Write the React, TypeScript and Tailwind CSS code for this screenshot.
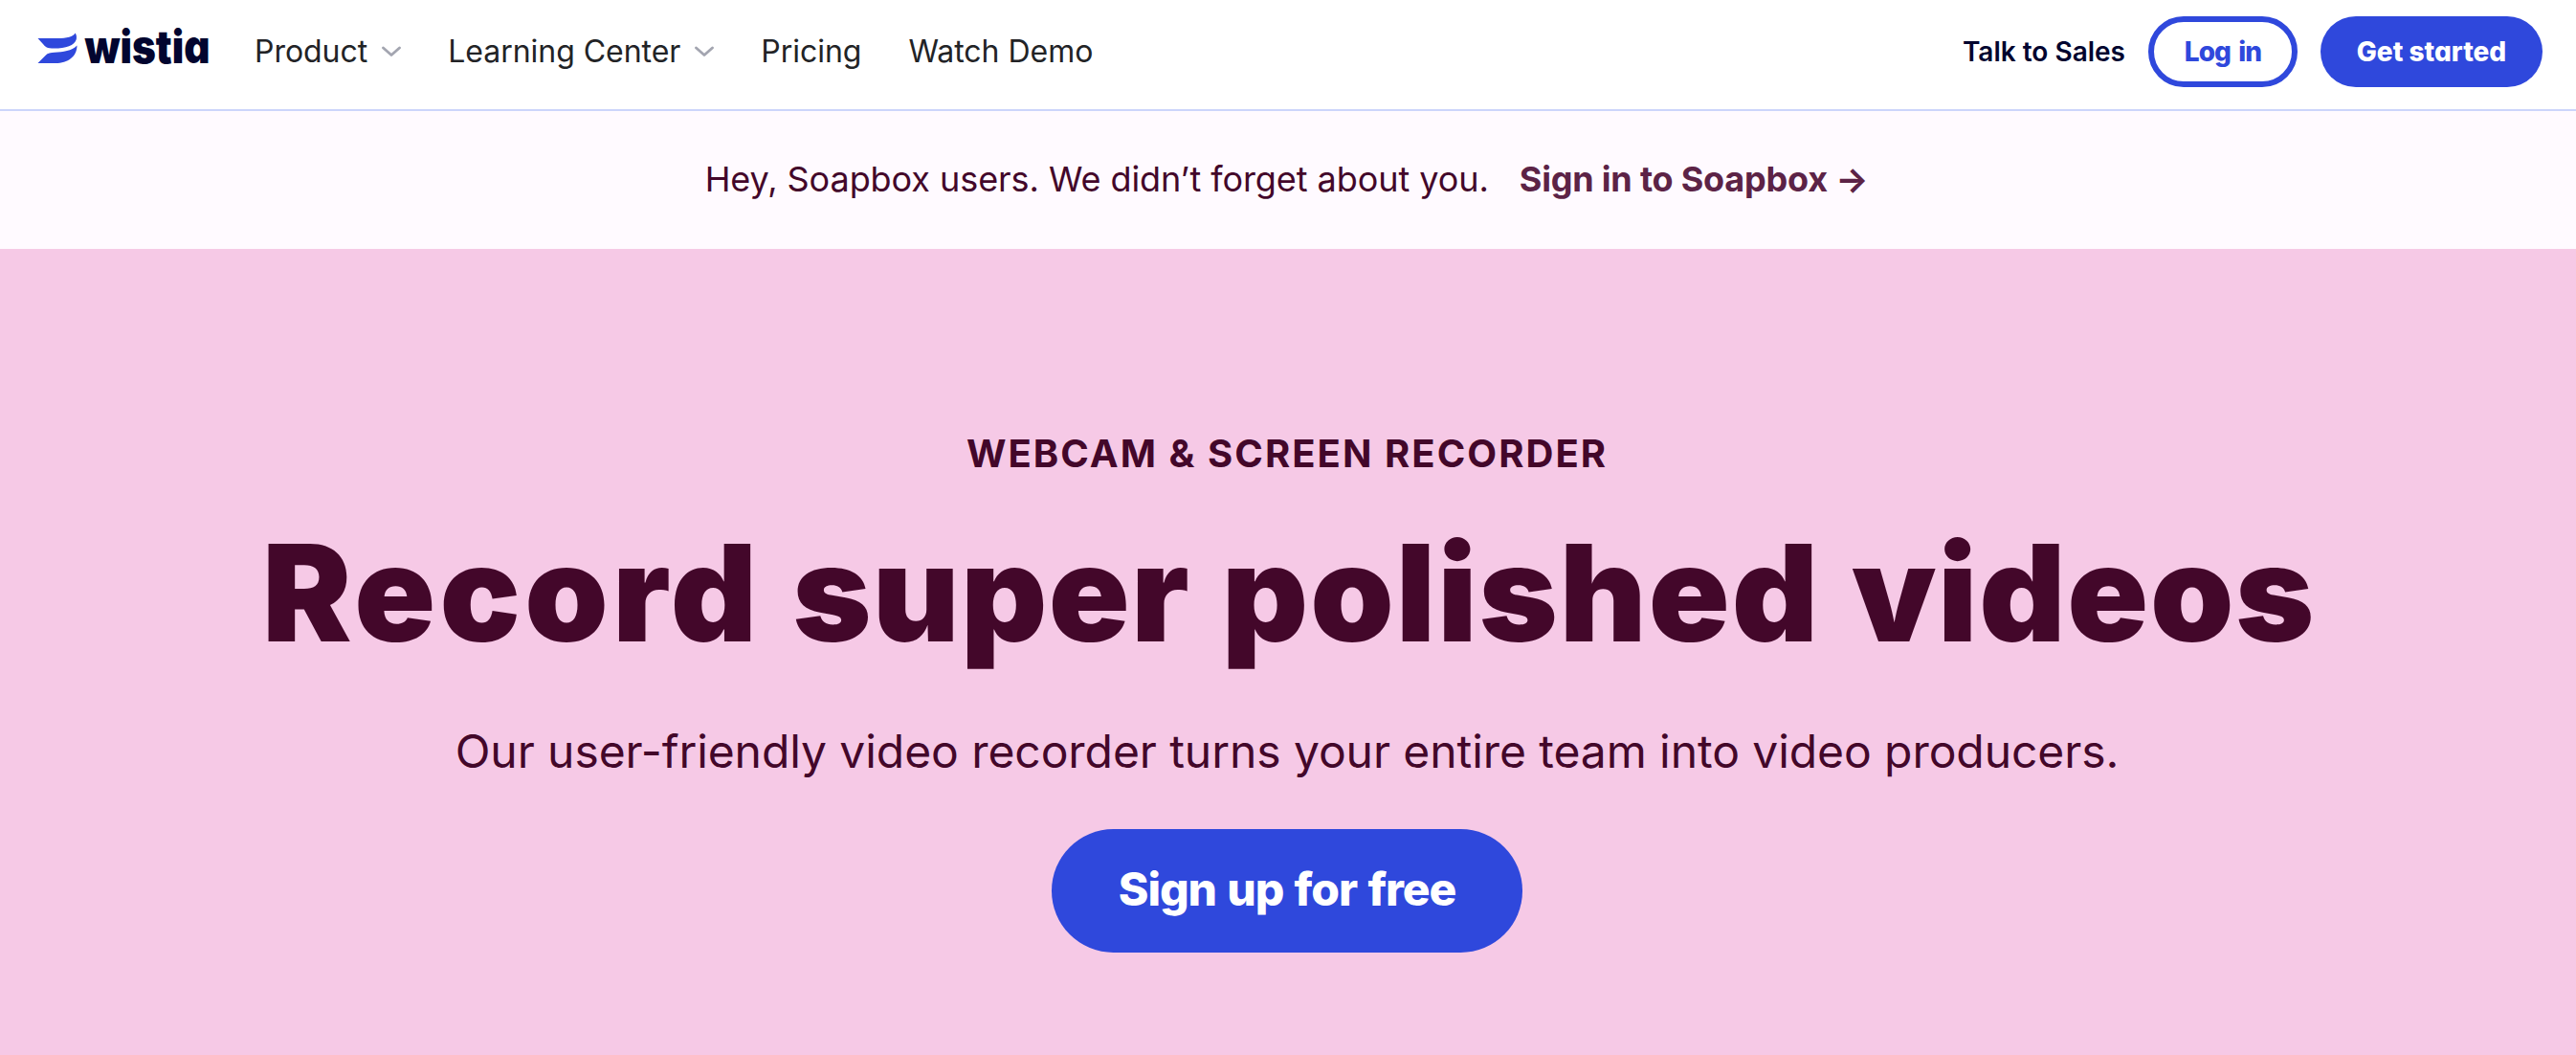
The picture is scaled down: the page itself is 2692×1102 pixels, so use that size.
function WistiaLogo() {
  return (
    <svg width="190" height="76" viewBox="38 10 190 76" className="shrink-0 overflow-visible" role="img" aria-label="wistia">
      <path
        fill="#2f48dc"
        d="M39.500 40H60C70 40 76.500 38.500 78.500 34.500Q80.500 36.500 79.800 41C78 48 67 51 54 50.500C48 50.500 46.500 47.500 44.500 45.500Z"
      />
      <path
        fill="#2f48dc"
        d="M39.500 66L47.500 58C50 55.200 53 55 57 54.800C66 54.500 75 53 80.500 47.500C80.500 59 71 66 58 66Z"
      />
      <text
        x="88.500"
        y="66"
        textLength="131"
        lengthAdjust="spacingAndGlyphs"
        className="fill-[#02052f] font-black text-[48px] leading-none [font-feature-settings:'cv11']"
      >
        wistia
      </text>
    </svg>
  );
}

function Caret() {
  return (
    <svg width="20" height="12" viewBox="0 0 20 12" fill="none" className="mt-px">
      <path d="M1.500 2L10 9.500L18.500 2" stroke="#a3a5b0" strokeWidth="2.800" strokeLinecap="round" strokeLinejoin="round" />
    </svg>
  );
}

const links = [
  { label: 'Product', menu: true },
  { label: 'Learning Center', menu: true },
  { label: 'Pricing', menu: false },
  { label: 'Watch Demo', menu: false },
];

function Header() {
  return (
    <header className="flex h-[116px] items-start justify-between border-b-2 border-[#ccd5fb] bg-white pl-[38px] pr-[35px] whitespace-nowrap">
      <div className="flex items-center pt-[10px]">
        <WistiaLogo />
        <nav className="ml-[38px] flex items-center gap-[49px] pt-[11px] text-[32px] leading-[34px] tracking-[-0.03px] text-[#222326]">
          {links.map((link) => (
            <a key={link.label} href="#" className="flex items-center gap-[15px]">
              {link.label}
              {link.menu && <Caret />}
            </a>
          ))}
        </nav>
      </div>

      <div className="flex items-center gap-6 pt-[17px] text-[28px] font-semibold">
        <a href="#" className="text-[#02052f]">
          Talk to Sales
        </a>
        <a
          href="#"
          className="flex h-[74px] w-[156px] items-center justify-center rounded-full border-[6px] border-[#2f48dc] font-extrabold tracking-[-0.9px] text-[#2f48dc] [word-spacing:3px]"
        >
          Log in
        </a>
        <a
          href="#"
          className="flex h-[74px] w-[232px] items-center justify-center rounded-full bg-[#2f48dc] font-extrabold text-white [font-feature-settings:'cv11']"
        >
          Get started
        </a>
      </div>
    </header>
  );
}

function Banner() {
  return (
    <div className="flex h-36 items-center justify-center gap-8 bg-[#fffaff] pr-[3px] pb-[3px] text-[36px] whitespace-nowrap text-[#43072a]">
      <p className="tracking-[-0.06px]">Hey, Soapbox users. We didn’t forget about you.</p>
      <a href="#" className="font-bold tracking-[-0.2px] text-[#5c2346]">
        Sign in to Soapbox →
      </a>
    </div>
  );
}

function Hero() {
  return (
    <section className="flex h-[842px] flex-col items-center bg-[#f6c9e6] pr-0.5 whitespace-nowrap text-[#43072a]">
      <p className="mt-[190px] text-[40px] leading-[48px] font-bold tracking-[2.05px] uppercase">
        Webcam &amp; Screen Recorder
      </p>
      <h1 className="mt-[41px] pl-1 text-[140px] leading-[160px] font-black [word-spacing:5px]">
        <span className="tracking-[4.3px]">Record</span> <span className="tracking-[1.3px]">super</span>{' '}
        <span className="tracking-[2px]">polished</span> <span className="tracking-[1.7px]">videos</span>
      </h1>
      <p className="mt-[57px] text-[48px] leading-[58px] tracking-[-0.07px]">
        Our user-friendly video recorder turns your entire team into video producers.
      </p>
      <a
        href="#"
        className="mt-[52px] flex h-[129px] w-[492px] items-center justify-center rounded-full bg-[#2f48dc] pb-1 text-[48px] font-extrabold tracking-[-1.1px] text-white [word-spacing:2px]"
      >
        Sign up for free
      </a>
    </section>
  );
}

export default function App() {
  return (
    <div className="h-[1102px] w-full overflow-hidden font-['Inter',sans-serif]">
      <Header />
      <Banner />
      <Hero />
    </div>
  );
}
